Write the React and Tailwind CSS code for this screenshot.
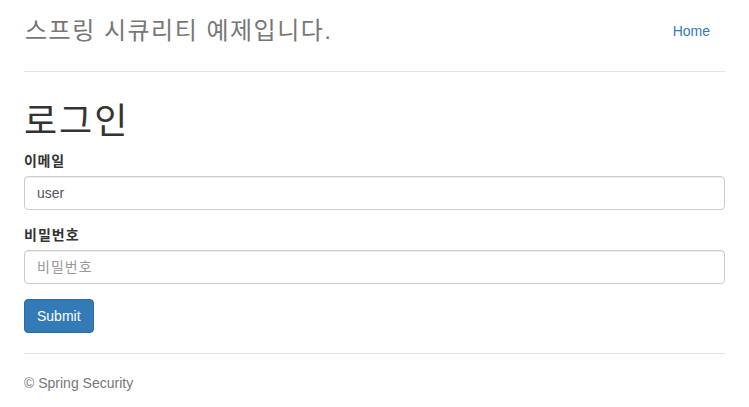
import React from "react";

const KO = "font-['Liberation_Sans','Noto_Sans_CJK_KR',sans-serif]";

export default function App() {
  return (
    <div className={`${KO} min-h-screen bg-white px-[24px] pt-[11px] text-[14px] text-[#333]`}>
      <header className="flex items-center justify-between border-b border-[#e5e5e5] pb-[20px]">
        <h3 className="h-[40px] pl-[1px] text-[24px] leading-[40px] tracking-[1.5px] text-[#777]">
          스프링 시큐리티 예제입니다.
        </h3>
        <nav>
          <a href="#" className="block px-[15px] py-[10px] leading-[20px] text-[#337ab7]">
            Home
          </a>
        </nav>
      </header>

      <h1 className="mt-[30px] h-[40px] text-[36px] leading-[40px] tracking-[2px]">로그인</h1>

      <form className="mt-[9px]" onSubmit={(e) => e.preventDefault()}>
        <div className="mb-[15px]">
          <label className="mb-[5px] block h-[20px] font-bold leading-[20px] tracking-[0.7px]">이메일</label>
          <input
            type="text"
            defaultValue="user"
            className="block h-[34px] w-full rounded-[4px] border border-[#ccc] px-[12px] text-[14px] text-[#555] shadow-[inset_0_1px_1px_rgba(0,0,0,0.075)] outline-none"
          />
        </div>
        <div className="mb-[15px]">
          <label className="mb-[5px] block h-[20px] font-bold leading-[20px] tracking-[1px]">비밀번호</label>
          <input
            type="password"
            placeholder="비밀번호"
            className="block h-[34px] w-full rounded-[4px] border border-[#ccc] px-[12px] text-[14px] tracking-[1px] text-[#555] shadow-[inset_0_1px_1px_rgba(0,0,0,0.075)] outline-none placeholder:text-[#999]"
          />
        </div>
        <button
          type="submit"
          className="h-[34px] rounded-[4px] border border-[#2e6da4] bg-[#337ab7] px-[12px] leading-[20px] text-white"
        >
          Submit
        </button>
      </form>

      <footer className="mt-[20px] border-t border-[#e5e5e5] pt-[19px] leading-[20px] text-[#777]">
        <p>© Spring Security</p>
      </footer>
    </div>
  );
}
